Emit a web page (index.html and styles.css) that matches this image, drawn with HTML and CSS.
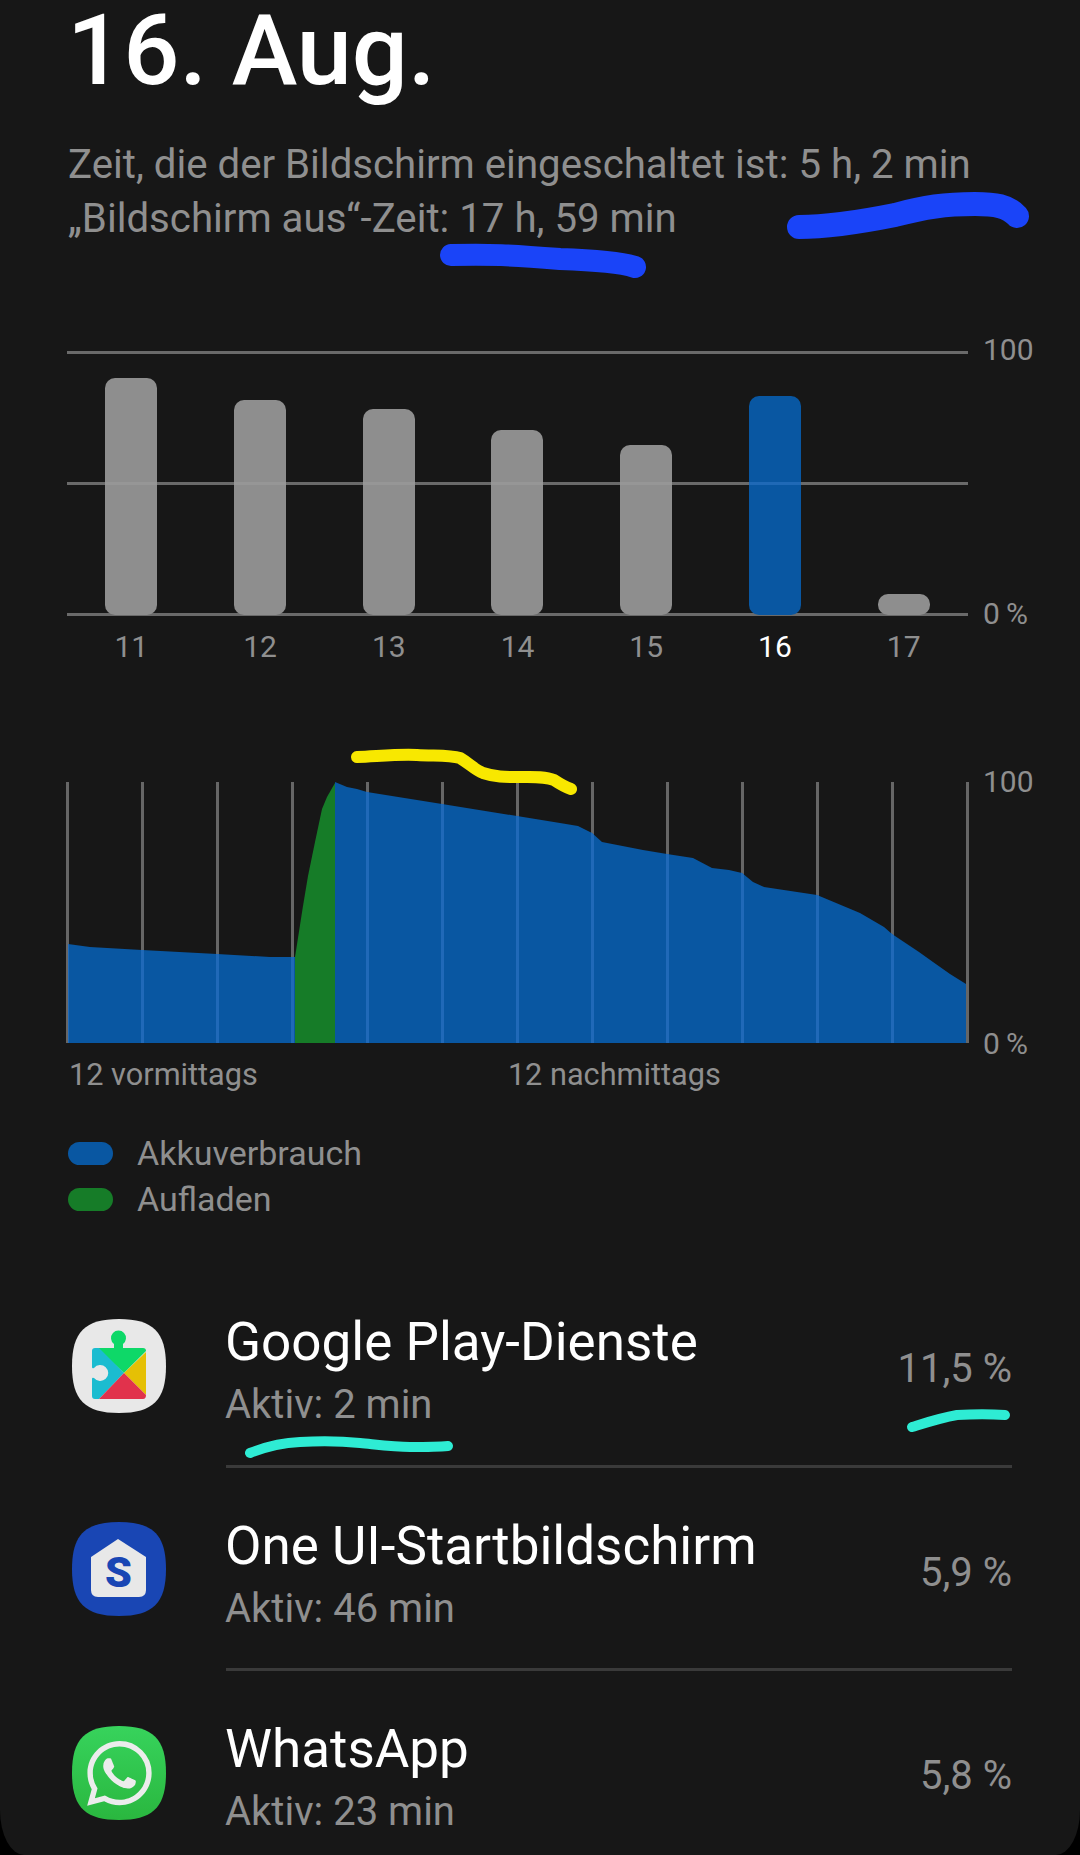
FILE: index.html
```html
<!DOCTYPE html>
<html lang="de">

<head>
    <meta charset="UTF-8">
    <meta name="viewport" content="width=device-width, initial-scale=1.0">
    <title>Akkuverbrauch</title>
    <link rel="stylesheet" href="styles.css">
</head>

<body>
    <div class="screen">
        <h1 class="date">16. Aug.</h1>
        <p class="times">Zeit, die der Bildschirm eingeschaltet ist: 5 h, 2 min<br>„Bildschirm aus“-Zeit: 17 h, 59 min</p>

        <div class="chart week">
            <div class="plot bars">
                <div class="col"><div class="bar" style="height: 237px"></div></div>
                <div class="col"><div class="bar" style="height: 215px"></div></div>
                <div class="col"><div class="bar" style="height: 206px"></div></div>
                <div class="col"><div class="bar" style="height: 185px"></div></div>
                <div class="col"><div class="bar" style="height: 170px"></div></div>
                <div class="col"><div class="bar today" style="height: 219px"></div></div>
                <div class="col"><div class="bar" style="height: 21px"></div></div>
            </div>
            <div class="axis week-axis">
                <span>100</span>
                <span>0&#8201;%</span>
            </div>
        </div>
        <div class="days">
            <span>11</span>
            <span>12</span>
            <span>13</span>
            <span>14</span>
            <span>15</span>
            <span class="current">16</span>
            <span>17</span>
        </div>

        <div class="chart day">
            <svg class="plot-day" width="904" height="262" viewBox="66 783 904 262">
                <defs>
                    <clipPath id="blue-area">
                        <path d="M68 945 L90 948 L142 951 L217 955 L270 958 L295 958 V1044 H68 Z M335 783 L347 788 L357 790 L367 793 L442 805 L517 817 L560 824 L578 827 L592 834 L602 843 L643 851 L667 855 L693 859 L712 869 L729 871 L742 874 L753 883 L764 888 L817 896 L860 914 L884 928 L892 935 L919 953 L933 963 L950 975 L966 985 V1044 H335 Z"/>
                    </clipPath>
                    <g id="grid-lines">
                        <path d="M67.5 783V1044 M142.5 783V1044 M217.5 783V1044 M292.5 783V1044 M367.5 783V1044 M442.5 783V1044 M517.5 783V1044 M592.5 783V1044 M667.5 783V1044 M742.5 783V1044 M817.5 783V1044 M892.5 783V1044 M967.5 783V1044"/>
                    </g>
                </defs>
                <use href="#grid-lines" class="grid"/>
                <path class="area-use" d="M68 945 L90 948 L142 951 L217 955 L270 958 L295 958 V1044 H68 Z M335 783 L347 788 L357 790 L367 793 L442 805 L517 817 L560 824 L578 827 L592 834 L602 843 L643 851 L667 855 L693 859 L712 869 L729 871 L742 874 L753 883 L764 888 L817 896 L860 914 L884 928 L892 935 L919 953 L933 963 L950 975 L966 985 V1044 H335 Z"/>
                <path class="area-charge" d="M295 958 L303 907 L308 877 L315 843 L322 810 L327 798 L335 784 V1044 H295 Z"/>
                <g clip-path="url(#blue-area)">
                    <use href="#grid-lines" class="grid-lit"/>
                </g>
            </svg>
            <div class="axis day-axis">
                <span>100</span>
                <span>0&#8201;%</span>
            </div>
        </div>
        <div class="hours">
            <span>12 vormittags</span>
            <span>12 nachmittags</span>
        </div>

        <ul class="legend">
            <li><i class="swatch use"></i>Akkuverbrauch</li>
            <li><i class="swatch charge"></i>Aufladen</li>
        </ul>

        <div class="apps">
            <div class="app">
                <svg class="icon" viewBox="0 0 94 94">
                    <path fill="#e8e8e8" d="M47 0C81 0 94 13 94 47C94 81 81 94 47 94C13 94 0 81 0 47C0 13 13 0 47 0Z"/>
                    <path fill="#0ed868" d="M25 29H42V25A7.5 7.5 0 1 1 51 25V29H71Q74 29 74 32L52 54Z"/>
                    <path fill="#1bbcd0" d="M23 29H27L52 54L27 80H23Q20 80 20 77V60Q20 58 22 59A8 8 0 1 0 22 49Q20 50 20 48V32Q20 29 23 29Z"/>
                    <path fill="#e5c005" d="M74 33V76L52 54Z"/>
                    <path fill="#e1324c" d="M27 80L52 54L74 76Q74 80 71 80Z"/>
                </svg>
                <div class="info">
                    <div class="name">Google Play-Dienste</div>
                    <div class="active">Aktiv: 2 min</div>
                </div>
                <div class="percent">11,5 %</div>
            </div>
            <div class="app">
                <svg class="icon" viewBox="0 0 94 94">
                    <path fill="#1946b4" d="M47 0C81 0 94 13 94 47C94 81 81 94 47 94C13 94 0 81 0 47C0 13 13 0 47 0Z"/>
                    <path fill="#e8e8e8" d="M46 17L74 35V68Q74 75 67 75H26Q19 75 19 68V35Z"/>
                    <text class="one-ui-s" x="46.5" y="65" text-anchor="middle">S</text>
                </svg>
                <div class="info">
                    <div class="name">One UI-Startbildschirm</div>
                    <div class="active">Aktiv: 46 min</div>
                </div>
                <div class="percent">5,9 %</div>
            </div>
            <div class="app">
                <svg class="icon" viewBox="0 0 94 94">
                    <defs>
                        <linearGradient id="wa" x1="0" y1="0" x2="0" y2="1">
                            <stop offset="0" stop-color="#37d35c"/>
                            <stop offset="1" stop-color="#2ab73f"/>
                        </linearGradient>
                    </defs>
                    <path fill="url(#wa)" d="M47 0C81 0 94 13 94 47C94 81 81 94 47 94C13 94 0 81 0 47C0 13 13 0 47 0Z"/>
                    <g transform="translate(15 15) scale(2.7)">
                        <path fill="#ececec" d="M17.472 14.382c-.297-.149-1.758-.867-2.03-.967-.273-.099-.471-.148-.67.15-.197.297-.767.966-.94 1.164-.173.199-.347.223-.644.075-.297-.15-1.255-.463-2.39-1.475-.883-.788-1.48-1.761-1.653-2.059-.173-.297-.018-.458.13-.606.134-.133.298-.347.446-.52.149-.174.198-.298.298-.497.099-.198.05-.371-.025-.52-.075-.149-.669-1.612-.916-2.207-.242-.579-.487-.5-.669-.51-.173-.008-.371-.01-.57-.01-.198 0-.52.074-.792.372-.272.297-1.04 1.016-1.04 2.479 0 1.462 1.065 2.875 1.213 3.074.149.198 2.096 3.2 5.077 4.487.709.306 1.262.489 1.694.625.712.227 1.36.195 1.871.118.571-.085 1.758-.719 2.006-1.413.248-.694.248-1.289.173-1.413-.074-.124-.272-.198-.57-.347m-5.421 7.403h-.004a9.87 9.87 0 01-5.031-1.378l-.361-.214-3.741.982.998-3.648-.235-.374a9.86 9.86 0 01-1.51-5.26c.001-5.45 4.436-9.884 9.888-9.884 2.64 0 5.122 1.03 6.988 2.898a9.825 9.825 0 012.893 6.994c-.003 5.45-4.437 9.884-9.885 9.884m8.413-18.297A11.815 11.815 0 0012.05 0C5.495 0 .16 5.335.157 11.892c0 2.096.547 4.142 1.588 5.945L.057 24l6.305-1.654a11.882 11.882 0 005.683 1.448h.005c6.554 0 11.89-5.335 11.893-11.893a11.821 11.821 0 00-3.48-8.413z"/>
                    </g>
                </svg>
                <div class="info">
                    <div class="name">WhatsApp</div>
                    <div class="active">Aktiv: 23 min</div>
                </div>
                <div class="percent">5,8 %</div>
            </div>
        </div>

        <!-- pen marks somebody drew on the screenshot -->
        <svg class="marks" width="1080" height="1855" viewBox="0 0 1080 1855">
            <path class="mark blue" stroke-width="24" d="M799 227C830 227 860 222 895 215C925 207 945 204 975 204C995 204 1008 206 1017 216"/>
            <path class="mark blue" stroke-width="22" d="M451 255C490 254 510 255 560 259C590 260 620 262 635 267"/>
            <path class="mark yellow" stroke-width="12" d="M357 757C380 756 400 754 417 755C435 756 450 755 460 758C470 764 475 770 483 773C495 777 505 777 517 777C530 777 545 776 554 780C560 784 565 787 571 789"/>
            <path class="mark teal" stroke-width="10" d="M250 1453C265 1447 280 1443 300 1442C320 1441 340 1441 360 1443C380 1445 395 1447 410 1447C425 1447 437 1447 448 1446"/>
            <path class="mark teal" stroke-width="10" d="M912 1427C925 1423 940 1418 957 1415C975 1414 990 1414 1005 1415"/>
        </svg>
    </div>
</body>

</html>
```

FILE: styles.css
```css
* {
    margin: 0;
    padding: 0;
    box-sizing: border-box;
    font-family: 'Roboto', sans-serif;
}

body {
    background: #000;
}

.screen {
    position: relative;
    width: 1080px;
    height: 1855px;
    padding-left: 67px;
    background: #171717;
    color: #8f8f8f;
    border-radius: 0 0 24px 24px / 0 0 45px 45px;
}

.date {
    height: 100px;
    font-size: 99px;
    line-height: 100px;
    font-weight: 500;
    color: #fff;
}

.times {
    margin-top: 38px;
    margin-left: 1px;
    font-size: 40.2px;
    line-height: 54px;
}

/* charts */
.chart {
    display: flex;
}

.week {
    margin-top: 105px;
}

.plot {
    width: 901px;
    height: 265px;
}

.bars {
    display: grid;
    grid-template-columns: repeat(7, 1fr);
    align-items: end;
    padding-bottom: 1px;
    background:
        linear-gradient(#6a6a6a, #6a6a6a) 0 0 / 100% 3px no-repeat,
        linear-gradient(#6a6a6a, #6a6a6a) 0 131px / 100% 3px no-repeat,
        linear-gradient(#6a6a6a, #6a6a6a) 0 262px / 100% 3px no-repeat;
}

.col {
    display: flex;
    justify-content: center;
}

.bar {
    position: relative;
    width: 52px;
    overflow: hidden;
    background: #8e8e8e;
    border-radius: 10px;
}

.bar::after {
    content: '';
    position: absolute;
    left: 0;
    right: 0;
    bottom: 130px;
    height: 3px;
    background: rgba(255, 255, 255, 0.08);
}

.today {
    background: #0957a2;
}

.today::after {
    background: #1f69b6;
}

.axis {
    display: flex;
    flex-direction: column;
    justify-content: space-between;
    margin-left: 15px;
    font-size: 30px;
    line-height: 36px;
}

.week-axis {
    height: 300px;
    margin-top: -19px;
}

.days {
    display: grid;
    grid-template-columns: repeat(7, 1fr);
    width: 901px;
    margin-top: -3px;
    font-size: 30px;
    line-height: 36px;
    text-align: center;
}

.current {
    color: #fff;
}

.day {
    margin-top: 117px;
}

.plot-day {
    display: block;
    margin-left: -1px;
}

.grid {
    stroke: #666;
    stroke-width: 3;
}

.grid-lit {
    stroke: #2069b8;
    stroke-width: 3;
}

.area-use {
    fill: #0957a2;
}

.area-charge {
    fill: #167c28;
}

.day-axis {
    height: 298px;
    margin-top: -18px;
    margin-left: 13px;
}

.hours {
    display: flex;
    gap: 250px;
    margin-top: -5px;
    margin-left: 2px;
    font-size: 30.7px;
    line-height: 36px;
}

.legend {
    margin-top: 37px;
    margin-left: 1px;
    list-style: none;
    font-size: 34px;
    line-height: 46px;
}

.legend li {
    display: flex;
    align-items: center;
    gap: 24px;
}

.swatch {
    width: 45px;
    height: 23px;
    border-radius: 12px;
}

.use {
    background: #0957a2;
}

.charge {
    background: #167c28;
}

/* app list */
.apps {
    margin-top: 42px;
    width: 945px;
}

.app {
    display: flex;
    align-items: center;
    height: 203.5px;
    padding-left: 5px;
    position: relative;
}

.app:not(:last-child)::after {
    content: '';
    position: absolute;
    left: 159px;
    right: 0;
    bottom: 0;
    height: 3px;
    background: #3a3a3a;
}

.icon {
    width: 94px;
    height: 94px;
    flex-shrink: 0;
}

.one-ui-s {
    font-size: 43px;
    font-weight: 900;
    fill: #1946b4;
}

.info {
    flex: 1;
    margin-left: 59px;
    padding-top: 11px;
}

.name {
    font-size: 53px;
    line-height: 68px;
    color: #fff;
}

.active {
    font-size: 40px;
    line-height: 58px;
}

.percent {
    margin-top: 7px;
    font-size: 40px;
    line-height: 44px;
}

/* pen marks */
.marks {
    position: absolute;
    top: 0;
    left: 0;
}

.mark {
    fill: none;
    stroke-linecap: round;
    stroke-linejoin: round;
}

.blue {
    stroke: #1a44f8;
}

.yellow {
    stroke: #f8e800;
}

.teal {
    stroke: #2eecd4;
}
```
